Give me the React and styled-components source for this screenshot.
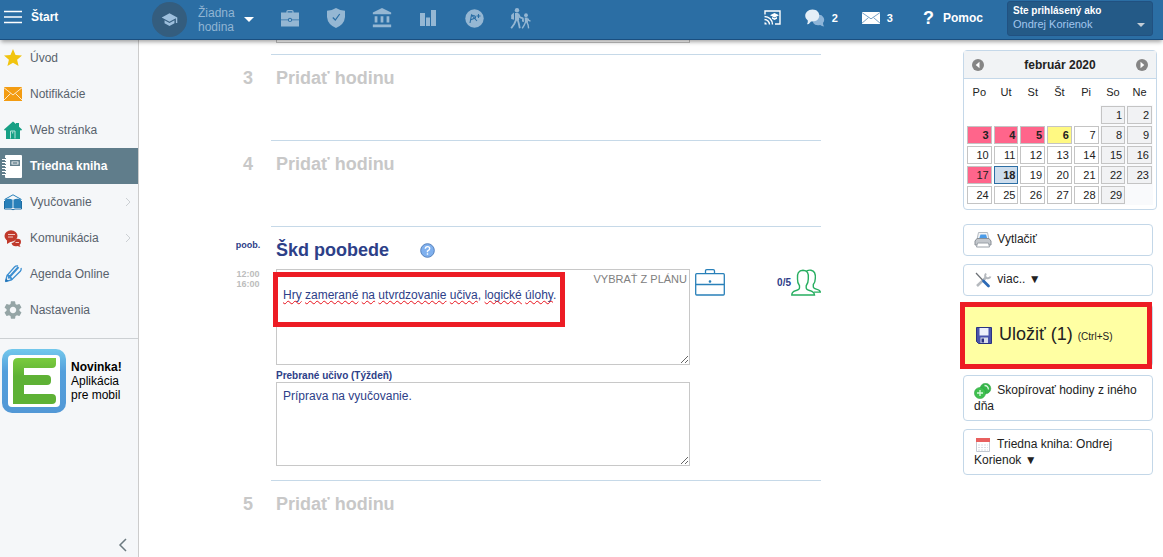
import React, { useState } from 'react'
import styled, { createGlobalStyle, css } from 'styled-components'
import { MdSchool, MdAccountBalance, MdStar, MdSettings } from 'react-icons/md'

const GlobalStyle = createGlobalStyle`
  * {
    box-sizing: border-box;
  }

  body {
    margin: 0;
    background: #fff;
    color: #222;
    font: 12px/14px "Liberation Sans", Arial, sans-serif;
  }

  button, textarea {
    margin: 0;
    font: inherit;
    color: inherit;
  }

  button {
    padding: 0;
    border: 0;
    background: none;
    cursor: pointer;
  }

  a {
    color: inherit;
    text-decoration: none;
  }

  svg {
    display: block;
    flex: none;
  }
`

const Page = styled.div`
  display: flex;
  flex-direction: column;
  height: 100vh;
  overflow: hidden;
`

const TopBar = styled.header`
  position: relative;
  z-index: 2;
  display: flex;
  flex: none;
  align-items: flex-start;
  height: 40px;
  padding-right: 10px;
  background: #2b6ea4;
  border-bottom: 1px solid #1a4f80;
  box-shadow: 0 3px 4px -1px rgba(0, 0, 0, .35);
  color: #fff;
`

const StartButton = styled.button`
  display: flex;
  align-items: center;
  gap: 9px;
  width: 152px;
  height: 34px;
  padding-left: 4px;
  font-weight: 700;
`

const LessonPicker = styled.button`
  display: flex;
  align-items: center;
  height: 39px;
  text-align: left;
  color: #91b5d3;
`

const LessonBadge = styled.span`
  display: flex;
  align-items: center;
  justify-content: center;
  width: 35px;
  height: 35px;
  margin-right: 11px;
  border-radius: 50%;
  background: #345d7e;
  color: #9dbfdd;
`

const LessonText = styled.span`
  width: 46px;
`

const Caret = styled.span`
  border: solid transparent;
  border-width: ${props => props.$size}px ${props => props.$size}px 0;
  border-top-color: ${props => props.$color};
`

const Tools = styled.nav`
  display: flex;
  margin-left: 13px;
  color: #95b7d3;
`

const ToolButton = styled.button`
  display: flex;
  align-items: center;
  justify-content: center;
  width: 46px;
  height: 36px;
`

const TopRight = styled.div`
  display: flex;
  align-items: center;
  gap: 24px;
  height: 35px;
  margin-left: auto;
`

const CounterLink = styled.a`
  display: flex;
  align-items: center;
  gap: 7px;
  font-size: 11px;
  font-weight: 700;
`

const HelpLink = styled.a`
  display: flex;
  align-items: center;
  gap: 9px;
  padding-left: 6px;
  font-weight: 700;
`

const QuestionMark = styled.span`
  font-size: 18px;
`

const UserBox = styled.button`
  display: flex;
  align-items: flex-end;
  justify-content: space-between;
  align-self: flex-start;
  flex: none;
  width: 146px;
  height: 35px;
  margin-top: 1px;
  padding: 4px 7px 4px 5px;
  border: 1px solid #215181;
  border-radius: 3px;
  background: #245a87;
  font-size: 11px;
  text-align: left;
  color: #a2c6ee;

  ${Caret} {
    margin-bottom: 4px;
  }
`

const UserLabel = styled.span`
  display: block;
  font-size: 10px;
  font-weight: 700;
  line-height: 13px;
  color: #fff;
`

const Body = styled.div`
  display: flex;
  flex: 1;
  min-height: 0;
`

const Sidebar = styled.aside`
  display: flex;
  flex: none;
  flex-direction: column;
  width: 139px;
  border-right: 1px solid #ccc;
  background: #f5f7f9;
`

const Menu = styled.nav`
  padding-bottom: 10px;
  border-bottom: 1px solid #ccd0d3;
`

const MenuItem = styled.a`
  display: flex;
  align-items: center;
  gap: 8px;
  height: 36px;
  padding: 0 7px 0 4px;
  color: #58626c;

  ${props => props.$active && css`
    gap: 7px;
    padding-left: 2px;
    background: #607d8b;
    font-weight: 700;
    color: #fff;
  `}
`

const MenuArrow = styled.svg`
  margin-left: auto;
`

const Promo = styled.a`
  display: flex;
  align-items: center;
  gap: 5px;
  padding: 10px 2px;
  color: #000;
`

const CollapseButton = styled.button`
  align-self: flex-end;
  margin-top: auto;
  padding: 5px 11px;
`

const Content = styled.main`
  display: flex;
  flex: 1;
  align-items: flex-start;
  justify-content: space-between;
  min-width: 0;
  overflow: hidden;
`

const Lessons = styled.div`
  flex: 0 1 596px;
  margin: 0 20px 0 86px;
`

const Lesson = styled.section`
  display: grid;
  grid-template-columns: 46px minmax(0, 1fr);
  min-height: ${props => props.$short ? 14 : 86}px;
`

const LessonSide = styled.div`
  padding-top: 14px;
  font-size: 9px;
  font-weight: 700;
  line-height: 10px;
  text-align: center;
  color: #2d4088;
`

const LessonNumber = styled.div`
  font-size: 18px;
  line-height: 20px;
  color: #c8c8c8;
`

const LessonTime = styled.div`
  padding-top: 19px;
  color: #bdbdbd;
`

const LessonMain = styled.div`
  padding: ${props => props.$flush ? 0 : 13}px 0 14px 5px;
  border-top: ${props => props.$flush ? 0 : 1}px solid #c6d9e8;
`

const LessonTitle = styled.h2`
  display: flex;
  align-items: center;
  gap: 31px;
  margin: 0;
  font-size: 18px;
  line-height: 20px;
  color: #2d4088;
`

const AddLesson = styled.button`
  display: block;
  font-size: 18px;
  font-weight: 700;
  line-height: 20px;
  color: #c8c8c8;
`

const LessonForm = styled.div`
  display: grid;
  grid-template-columns: minmax(0, 414px) 36px 1fr;
  margin-top: 9px;
`

const FieldBox = styled.div`
  position: relative;
`

const Field = styled.textarea`
  display: block;
  width: 100%;
  height: ${props => props.$height}px;
  padding: ${props => props.$top}px 6px 0;
  border: 1px solid #c8c8c8;
  border-radius: 0;
  background: #fff;
  outline: 0;
  color: #2d4088;
  resize: vertical;
`

const PreviousField = styled.div`
  width: 414px;
  max-width: 100%;
  height: 3px;
  margin-bottom: -3px;
  border: 1px solid #c0c0c0;
  border-top: 0;
`

const Spelling = styled.div`
  position: absolute;
  top: 19px;
  left: 7px;
  color: transparent;
  pointer-events: none;

  u {
    text-decoration: underline wavy #e8121c 1px;
    text-decoration-skip-ink: none;
    text-underline-offset: 1px;
  }
`

const PlanButton = styled.button`
  position: absolute;
  top: 3px;
  right: 3px;
  font-size: 11px;
  color: #808080;
`

const FieldLabel = styled.label`
  display: block;
  padding-top: 5px;
  font-size: 10px;
  font-weight: 700;
  line-height: 12px;
  color: #2d4088;
`

const Attendance = styled.button`
  display: flex;
  align-items: center;
  align-self: start;
  justify-self: end;
  font-size: 10px;
  font-weight: 700;
  color: #2d4088;
`

const AttachButton = styled.button`
  align-self: start;
  justify-self: end;
`

// Red frame drawn over the part that the guide points to
const Marker = styled.div`
  position: absolute;
  inset: ${props => props.$inset};
  border: 5px solid #ed1c24;
  pointer-events: none;
`

const SidePanel = styled.aside`
  flex: none;
  width: 194px;
  margin: 10px 6px 0 0;
`

const CalendarBox = styled.div`
  height: 160px;
  border: 1px solid #c5d8e9;
  border-radius: 4px;
`

const CalendarHead = styled.div`
  display: flex;
  align-items: center;
  justify-content: space-between;
  height: 28px;
  padding: 0 8px;
  border-bottom: 1px solid #c5d8e9;
  background: #f1f3f5;
  font-weight: 700;
`

const CalendarTable = styled.table`
  width: 187px;
  margin: 0 2px;
  border-collapse: collapse;
  table-layout: fixed;
  font-size: 11px;

  th {
    height: 26px;
    padding: 0;
    font-weight: 400;
  }

  td {
    height: 20px;
    padding: 1px;
  }

  td:nth-child(n + 6) {
    background: #f9fafc;
  }
`

const dayColors = {
  absent: '#ff658b',
  partial: '#fff982',
  today: '#cddded',
  weekend: '#f1f2f4',
}

const Day = styled.button`
  display: block;
  width: 100%;
  height: 18px;
  padding-right: 2px;
  border: 1px solid ${props => props.$kind === 'today' ? '#2b6ea4' : '#c4c4c4'};
  background: ${props => dayColors[props.$kind] || '#fff'};
  font-weight: ${props => props.$bold ? 700 : 400};
  line-height: 16px;
  text-align: right;
  color: #222;
`

const Actions = styled.div`
  display: flex;
  flex-direction: column;
  gap: 8px;
  margin: 14px 4px 0 0;
`

const ActionSlot = styled.div`
  position: relative;
`

const Action = styled.button`
  display: block;
  width: 100%;
  min-height: ${props => props.$primary ? 63 : 32}px;
  padding: 7px 10px;
  border: 1px solid #c3d7e8;
  border-radius: 4px;
  background: ${props => props.$primary ? '#ffffa3' : '#fff'};
  text-align: left;
  color: #222;

  svg {
    display: inline-block;
    margin-right: ${props => props.$primary ? 7 : 2}px;
    vertical-align: middle;
  }
`

const SaveLabel = styled.span`
  font-size: 18px;
  line-height: 20px;
  vertical-align: middle;
`

const SaveHint = styled.small`
  font-size: 10px;
`

const BagIcon = () => (
  <svg width="18" height="17" viewBox="0 0 18 17" fill="currentColor">
    <path d="M6 3V1.600Q6 .6 7 .6h4Q12 .6 12 1.600V3" fill="none" stroke="currentColor" strokeWidth="1.200" />
    <path d="M0 2.500h18v7h-6.800a2.300 2.300 0 0 0-4.400 0H0z" />
    <path d="M0 10.300h6.800a2.300 2.300 0 0 0 4.400 0H18V16.500H0z" />
    <circle cx="9" cy="10" r="1.200" />
  </svg>
)

const ShieldIcon = () => (
  <svg width="18" height="20" viewBox="0 0 18 20">
    <path d="M9 0Q13 2.600 18 2.800V9q-.7 7.500-9 11Q.7 16.500 0 9V2.800Q5 2.600 9 0z" fill="currentColor" />
    <path d="M5.800 9.500l2.500 2.500 4.400-6" fill="none" stroke="#2b6ea4" strokeWidth="1.200" />
  </svg>
)

const BarsIcon = () => (
  <svg width="16" height="16" viewBox="0 0 16 16" fill="currentColor">
    <path d="M0 3h5v13H0zM6 7.500h4V16H6zM11 0h5v16h-5z" />
  </svg>
)

const GradeIcon = () => (
  <svg width="19" height="19" viewBox="0 0 19 19">
    <circle cx="9.500" cy="9.500" r="9.200" fill="currentColor" />
    <path d="M5 14L6.500 6l5.500 6M6 10.800L10.500 8.800Q11 6.500 6.500 6M11.500 7h4M13.500 5v4" fill="none" stroke="#2b6ea4" strokeWidth="1.100" />
  </svg>
)

const TripIcon = () => (
  <svg width="21" height="21" viewBox="0 0 21 21" fill="none" stroke="currentColor" strokeWidth="1.800">
    <circle cx="7" cy="2.200" r="2.200" fill="currentColor" stroke="none" />
    <path d="M5 5h3.500l.7 7H5z" fill="currentColor" stroke="none" />
    <path d="M3.900 4.500L1.200 7v4l2.900.8z" fill="currentColor" stroke="none" />
    <path d="M6.500 11l-2.300 5-3 4.300M7.500 11l1.300 4.500 1 4.800M8.300 6l1.700 3.300 3 1" />
    <circle cx="16" cy="7.200" r="1.900" fill="currentColor" stroke="none" />
    <path d="M14.700 9.600h2.800l.6 4.900h-3.200zM13.700 9.500L12 11.500v2l2 .5z" fill="currentColor" stroke="none" />
    <path d="M15.600 14l-1.400 3.200-2 3.200M16.800 14l1.300 3 .5 3.400M17.500 10.500l1.300 2 1.700.6" strokeWidth="1.400" />
  </svg>
)

const CastIcon = () => (
  <svg width="17" height="15" viewBox="0 0 17 15" fill="none" stroke="#fff" strokeWidth="1.400">
    <path d="M1 4.500V1h15v13h-5" />
    <path d="M.5 6.500A8 8 0 0 1 8.500 14.500M.5 9.500a5 5 0 0 1 5 5" />
    <path d="M.5 12.200a2.300 2.300 0 0 1 2.300 2.300H.5z" fill="#fff" stroke="none" />
    <path d="M10.500 3L15 5.200l-4.500 2.200L6 5.200zM8 7v1.800l2.500 1.200L13 8.800V7l-2.500 1.200z" fill="#fff" stroke="none" />
  </svg>
)

const ChatIcon = () => (
  <svg width="20" height="18" viewBox="0 0 20 18">
    <path d="M8 6h5a5 5 0 0 1 5 8q0 2 1.200 3.500-2.500-.2-4-1.500-5 1-7-2z" fill="#8db4d8" />
    <path d="M7.500.5c9 0 9 12 0 12l-1.500-.1Q4.500 15 2 15.200q1-1.700.8-3.800C-2.200 8 .5.500 7.500.5z" fill="#e4eef7" />
  </svg>
)

const MailIcon = ({ fill, line, height }) => (
  <svg width="18" height={height} viewBox="0 0 18 14" preserveAspectRatio="none">
    <path d="M0 0h18v14H0z" fill={fill} />
    <path d="M0 .7l9 7.300L18 .7M0 13l6.500-6.500M18 13l-6.500-6.500" fill="none" stroke={line} strokeWidth="1" />
  </svg>
)

const HomeIcon = () => (
  <svg width="18" height="18" viewBox="0 0 18 18">
    <path d="M0 8.500L9 .5l3 2.600V2h3v3.800L18 8.500l-1 1.300-1-.7V18H2V9.100L1 9.800z" fill="#17a085" />
    <path d="M6.500 17.500V10h4.500v7.500M8.700 10.500v2" fill="none" stroke="#b9e2da" />
  </svg>
)

const BookIcon = () => (
  <svg width="21" height="23" viewBox="0 0 21 23">
    <rect x="3" width="17" height="23" rx="1" fill="#fff" />
    <path d="M8.800 5.800h8.400v4.400H8.800zM10.500 8h5" fill="none" stroke="#607d8b" strokeWidth="1.500" />
    <path d="M0 4.500h4M0 7.500h4M0 10.500h4M0 13.500h4M0 16.500h4M0 19.500h4" stroke="#fff" strokeWidth="1.200" />
    <path d="M3.500 3v1M3.500 6v1M3.500 9v1M3.500 12v1M3.500 15v1M3.500 18v1" stroke="#607d8b" />
  </svg>
)

const TeachIcon = () => (
  <svg width="18" height="17" viewBox="0 0 18 17">
    <path d="M.5 5.500L9 .8l8.500 4.700" fill="none" stroke="#2980b9" />
    <path d="M1 5.500q4.500-1.500 8 .5 3.500-2 8-.5V14H1z" fill="#2980b9" />
    <path d="M9 6v8" stroke="#dcebf5" />
    <path d="M.5 7v8H7q2 1.500 4 0h6.500V7" fill="none" stroke="#1f6da3" />
  </svg>
)

const TalkIcon = () => (
  <svg width="18" height="17" viewBox="0 0 18 17">
    <ellipse cx="7" cy="6" rx="6.500" ry="5.700" fill="#c0392b" />
    <path d="M3 9v5l5-3M12 9q5-1 5 3 0 2-1.500 3l1 2-3-1q-5 1-6-3 3 0 4.500-4z" fill="#c0392b" />
    <path d="M4 4.500h7M4 7h5M11.500 12.500h3.500" stroke="#f3c7c2" />
  </svg>
)

const PencilIcon = () => (
  <svg width="18" height="18" viewBox="0 0 18 18" fill="none" stroke="#3d8fd1" strokeWidth="1.300">
    <path d="M1.500 16.500L3 10.500 10.500 2Q12 .5 14 1M1.500 16.500l6-1.500L16.500 6q1-1.500.5-3" />
    <path d="M3 10.500q2.500-.5 2 2 2.500-.5 2.500 2.500M5 12.500L14.500 2" strokeWidth="2" />
    <path d="M1 17l1-3.500L4.500 16z" fill="#2472b3" stroke="none" />
  </svg>
)

const EduLogo = () => (
  <svg width="64" height="64" viewBox="0 0 64 64">
    <defs>
      <linearGradient id="edu-frame" x2="0" y2="1">
        <stop offset="0" stopColor="#73c8ec" />
        <stop offset=".35" stopColor="#539fdc" />
        <stop offset="1" stopColor="#5298d6" />
      </linearGradient>
      <linearGradient id="edu-letter" x2="0" y2="1">
        <stop offset="0" stopColor="#7bcb3e" />
        <stop offset=".4" stopColor="#5eb135" />
      </linearGradient>
    </defs>
    <rect width="64" height="64" rx="10" fill="url(#edu-frame)" />
    <rect x="6" y="6" width="52" height="52" rx="4" fill="#fff" />
    <path d="M16 9h38v6q0 4-4 4H22v7h23q4 0 4 4v2q0 4-4 4H22v9h28q4 0 4 4v2q0 4-4 4H11V14q0-5 5-5z" fill="url(#edu-letter)" />
  </svg>
)

const ArrowIcon = ({ next }) => (
  <svg width="12" height="12" viewBox="0 0 12 12">
    <circle cx="6" cy="6" r="6" fill="#858585" />
    <path d={next ? 'M4.500 2.800v6.400L8.300 6z' : 'M7.500 2.800v6.400L3.700 6z'} fill="#fff" />
  </svg>
)

const QuestionIcon = () => (
  <svg width="15" height="15" viewBox="0 0 15 15">
    <circle cx="7.500" cy="7.500" r="6.800" fill="#7fb0ee" stroke="#5581bd" />
    <path d="M5.300 5.800q0-2.200 2.200-2.200t2.200 1.900Q9.700 6.800 7.500 8v1.200M7.500 10.300v1.500" fill="none" stroke="#fff" strokeWidth="1.400" />
  </svg>
)

const CaseIcon = () => (
  <svg width="31" height="27" viewBox="0 0 31 27" fill="none" stroke="#2980b9" strokeWidth="1.300">
    <rect x=".7" y="4.700" width="28.600" height="21.300" rx="1" />
    <path d="M10.500 4.500V2q0-1.300 1.300-1.300h6.400q1.300 0 1.300 1.300v2.500M1 15.500h28" />
    <circle cx="15" cy="12.500" r=".7" fill="#2980b9" />
  </svg>
)

const PupilsIcon = () => (
  <svg width="30" height="27" viewBox="0 0 30 27" fill="none" stroke="#27ae60" strokeWidth="1.400">
    <path d="M.8 26q0-3 3.700-4.300 4-1 4-3v-2Q6.300 14 6.500 10 5.500 1.500 12 1.300q6.300 0 5.300 8.700 0 4-2.100 6.700v2q0 2 4 3 4 1.300 4.300 4.300z" />
    <path d="M15.500 2Q18 .8 20 1.200q5 1 4.300 8.300 0 3.500-2 6v2.200q0 1.600 3 2.400 4 1 4 3h-6.500" />
  </svg>
)

const PrintIcon = () => (
  <svg width="18" height="16" viewBox="0 0 18 16">
    <path d="M4.500 .5h9l1.500 7H3z" fill="#f2f4f6" stroke="#b3bac1" />
    <path d="M5 7l1.500-4.500h5.500L13.500 7z" fill="#4a9be8" />
    <path d="M1 9l2-2.500h12L17 9v4H1z" fill="#c3c7cc" stroke="#8a9097" />
    <path d="M3.500 11h11l1 4h-13z" fill="#fff" stroke="#9aa1a8" />
  </svg>
)

const RepairIcon = () => (
  <svg width="18" height="16" viewBox="0 0 18 16" fill="none">
    <path d="M3 14L12.500 5" stroke="#b5b9be" strokeWidth="2.500" />
    <path d="M12 1.500q-2 3 .5 4.500 3 1 4-1.500" stroke="#b5b9be" strokeWidth="2" />
    <path d="M2 1l6.500 7" stroke="#6b7075" strokeWidth="1.200" />
    <path d="M9.500 9l5 5" stroke="#2c69b5" strokeWidth="2.800" strokeLinecap="round" />
  </svg>
)

const DiskIcon = () => (
  <svg width="18" height="17" viewBox="0 0 18 17">
    <path d="M2.500.500h15v16h-13l-2-2z" fill="#4953ac" stroke="#2b3382" />
    <path d="M5.500 1h9v7.500h-9z" fill="#edf0fa" />
    <path d="M6.500 10.500h7.500v5.500H6.500z" fill="#d9ddeb" />
    <path d="M7.500 11.500H10v4H7.500z" fill="#2b3382" />
  </svg>
)

const CopyIcon = () => (
  <svg width="18" height="16" viewBox="0 0 18 16">
    <circle cx="11.500" cy="5.500" r="5.300" fill="#36b54a" stroke="#2aa03d" strokeWidth=".5" />
    <circle cx="6" cy="10" r="5.600" fill="#3fc04f" stroke="#2aa03d" strokeWidth=".5" />
    <path d="M3 10h6M6 7v6M10.500 2.500Q14 2.500 14.500 6.500" fill="none" stroke="#d8f7dc" strokeWidth="1.300" />
  </svg>
)

const DiaryIcon = () => (
  <svg width="18" height="16" viewBox="0 0 18 16">
    <path d="M2.500 1.500h13v13h-13z" fill="#fff" stroke="#c3c9d2" />
    <path d="M2 1h14v4H2z" fill="#e8605f" />
    <path d="M4 8h10M4 10.500h10M4 13h10" stroke="#d9dde4" strokeDasharray="2 1" />
  </svg>
)

const tools = [
  ['Práca', <BagIcon />],
  ['Bezpečnosť', <ShieldIcon />],
  ['Škola', <MdAccountBalance size={22} />],
  ['Štatistiky', <BarsIcon />],
  ['Známky', <GradeIcon />],
  ['Výlety', <TripIcon />],
]

const menu = [
  { label: 'Úvod', icon: <MdStar size={18} color="#f1c40f" viewBox="2 2 20 20" /> },
  { label: 'Notifikácie', icon: <MailIcon fill="#f39c12" line="#fdeacb" height={14} /> },
  { label: 'Web stránka', icon: <HomeIcon /> },
  { label: 'Triedna kniha', icon: <BookIcon />, active: true },
  { label: 'Vyučovanie', icon: <TeachIcon />, more: true },
  { label: 'Komunikácia', icon: <TalkIcon />, more: true },
  { label: 'Agenda Online', icon: <PencilIcon /> },
  { label: 'Nastavenia', icon: <MdSettings size={18} color="#95a5a6" viewBox="2 2 20 20" /> },
]

const weekDays = ['Po', 'Ut', 'St', 'Št', 'Pi', 'So', 'Ne']

const marked = { 3: 'absent', 4: 'absent', 5: 'absent', 6: 'partial', 17: 'absent', 18: 'today' }
const boldDays = [3, 4, 5, 6, 18]

// 1 February 2020 is a Saturday, so the first row has five blanks
const weeks = [0, 1, 2, 3, 4].map(week =>
  weekDays.map((_, idx) => {
    const day = week * 7 + idx - 4
    return day > 0 && day < 30 ? day : null
  })
)

function EmptyLesson({ number }) {
  return (
    <Lesson>
      <LessonSide>
        <LessonNumber>{number}</LessonNumber>
      </LessonSide>
      <LessonMain>
        <AddLesson>Pridať hodinu</AddLesson>
      </LessonMain>
    </Lesson>
  )
}

function Calendar() {
  return (
    <CalendarBox>
      <CalendarHead>
        <button aria-label="Predchádzajúci mesiac"><ArrowIcon /></button>
        február 2020
        <button aria-label="Nasledujúci mesiac"><ArrowIcon next /></button>
      </CalendarHead>
      <CalendarTable>
        <thead>
          <tr>
            {weekDays.map(day => <th key={day} scope="col">{day}</th>)}
          </tr>
        </thead>
        <tbody>
          {weeks.map((week, idx) => (
            <tr key={idx}>
              {week.map((day, col) => (
                <td key={col}>
                  {day && (
                    <Day $kind={marked[day] || (col > 4 && 'weekend')} $bold={boldDays.includes(day)}>
                      {day}
                    </Day>
                  )}
                </td>
              ))}
            </tr>
          ))}
        </tbody>
      </CalendarTable>
    </CalendarBox>
  )
}

export default function App() {
  const [plan, setPlan] = useState('Hry zamerané na utvrdzovanie učiva, logické úlohy.')
  const [weekPlan, setWeekPlan] = useState('Príprava na vyučovanie.')

  return (
    <Page>
      <GlobalStyle />
      <TopBar>
        <StartButton>
          <svg width="18" height="14" viewBox="0 0 18 14" stroke="#fff" strokeWidth="1.500">
            <path d="M0 1.500h18M0 7h18M0 12.500h18" />
          </svg>
          Štart
        </StartButton>
        <LessonPicker>
          <LessonBadge><MdSchool size={17} /></LessonBadge>
          <LessonText>Žiadna hodina</LessonText>
          <Caret $size={5} $color="#fff" />
        </LessonPicker>
        <Tools>
          {tools.map(([label, icon]) => (
            <ToolButton key={label} aria-label={label}>{icon}</ToolButton>
          ))}
        </Tools>
        <TopRight>
          <a href="#cast" aria-label="Premietať"><CastIcon /></a>
          <CounterLink href="#chat"><ChatIcon />2</CounterLink>
          <CounterLink href="#mail"><MailIcon fill="#fff" line="#6d9cc4" height={12} />3</CounterLink>
          <HelpLink href="#help"><QuestionMark>?</QuestionMark>Pomoc</HelpLink>
          <UserBox>
            <span>
              <UserLabel>Ste prihlásený ako</UserLabel>
              Ondrej Korienok
            </span>
            <Caret $size={4} $color="#c3cdd6" />
          </UserBox>
        </TopRight>
      </TopBar>

      <Body>
        <Sidebar>
          <Menu>
            {menu.map(item => (
              <MenuItem key={item.label} href="#menu" $active={item.active}>
                {item.icon}
                {item.label}
                {item.more && (
                  <MenuArrow width="6" height="10" viewBox="0 0 6 10" fill="none" stroke="#ccd0d4">
                    <path d="M1 1l4 4-4 4" />
                  </MenuArrow>
                )}
              </MenuItem>
            ))}
          </Menu>
          <Promo href="#app">
            <EduLogo />
            <span>
              <strong>Novinka!</strong><br />
              Aplikácia<br />
              pre mobil
            </span>
          </Promo>
          <CollapseButton aria-label="Skryť menu">
            <svg width="9" height="14" viewBox="0 0 9 14" fill="none" stroke="#6c7a80" strokeWidth="1.500">
              <path d="M8 1L2 7l6 6" />
            </svg>
          </CollapseButton>
        </Sidebar>

        <Content>
          <Lessons>
            <Lesson $short>
              <LessonSide />
              <LessonMain $flush>
                <PreviousField />
              </LessonMain>
            </Lesson>
            <EmptyLesson number={3} />
            <EmptyLesson number={4} />
            <Lesson>
              <LessonSide>
                poob.
                <LessonTime>12:00<br />16:00</LessonTime>
              </LessonSide>
              <LessonMain>
                <LessonTitle>
                  Škd poobede
                  <button aria-label="Pomocník"><QuestionIcon /></button>
                </LessonTitle>
                <LessonForm>
                  <div>
                    <FieldBox>
                      <Field
                        aria-label="Škd poobede"
                        spellCheck={false}
                        $height={96}
                        $top={18}
                        value={plan}
                        onChange={e => setPlan(e.target.value)}
                      />
                      <Spelling aria-hidden="true">
                        {plan.split(/([\s,.]+)/).map((word, idx) => (
                          idx % 2 ? word : <u key={idx}>{word}</u>
                        ))}
                      </Spelling>
                      <PlanButton>VYBRAŤ Z PLÁNU</PlanButton>
                      <Marker $inset="3px 125px 38px -3px" />
                    </FieldBox>
                    <FieldLabel htmlFor="week-plan">Prebrané učivo (Týždeň)</FieldLabel>
                    <Field
                      id="week-plan"
                      spellCheck={false}
                      $height={84}
                      $top={6}
                      value={weekPlan}
                      onChange={e => setWeekPlan(e.target.value)}
                    />
                  </div>
                  <AttachButton aria-label="Prílohy"><CaseIcon /></AttachButton>
                  <Attendance>0/5<PupilsIcon /></Attendance>
                </LessonForm>
              </LessonMain>
            </Lesson>
            <EmptyLesson number={5} />
          </Lessons>

          <SidePanel>
            <Calendar />
            <Actions>
              <Action><PrintIcon /> Vytlačiť</Action>
              <Action><RepairIcon /> viac.. ▼</Action>
              <ActionSlot>
                <Action $primary>
                  <DiskIcon />
                  <SaveLabel>Uložiť (1) <SaveHint>(Ctrl+S)</SaveHint></SaveLabel>
                </Action>
                <Marker $inset="-2px 1px -2px -3px" />
              </ActionSlot>
              <Action><CopyIcon /> Skopírovať hodiny z iného dňa</Action>
              <Action><DiaryIcon /> Triedna kniha: Ondrej Korienok ▼</Action>
            </Actions>
          </SidePanel>
        </Content>
      </Body>
    </Page>
  )
}
